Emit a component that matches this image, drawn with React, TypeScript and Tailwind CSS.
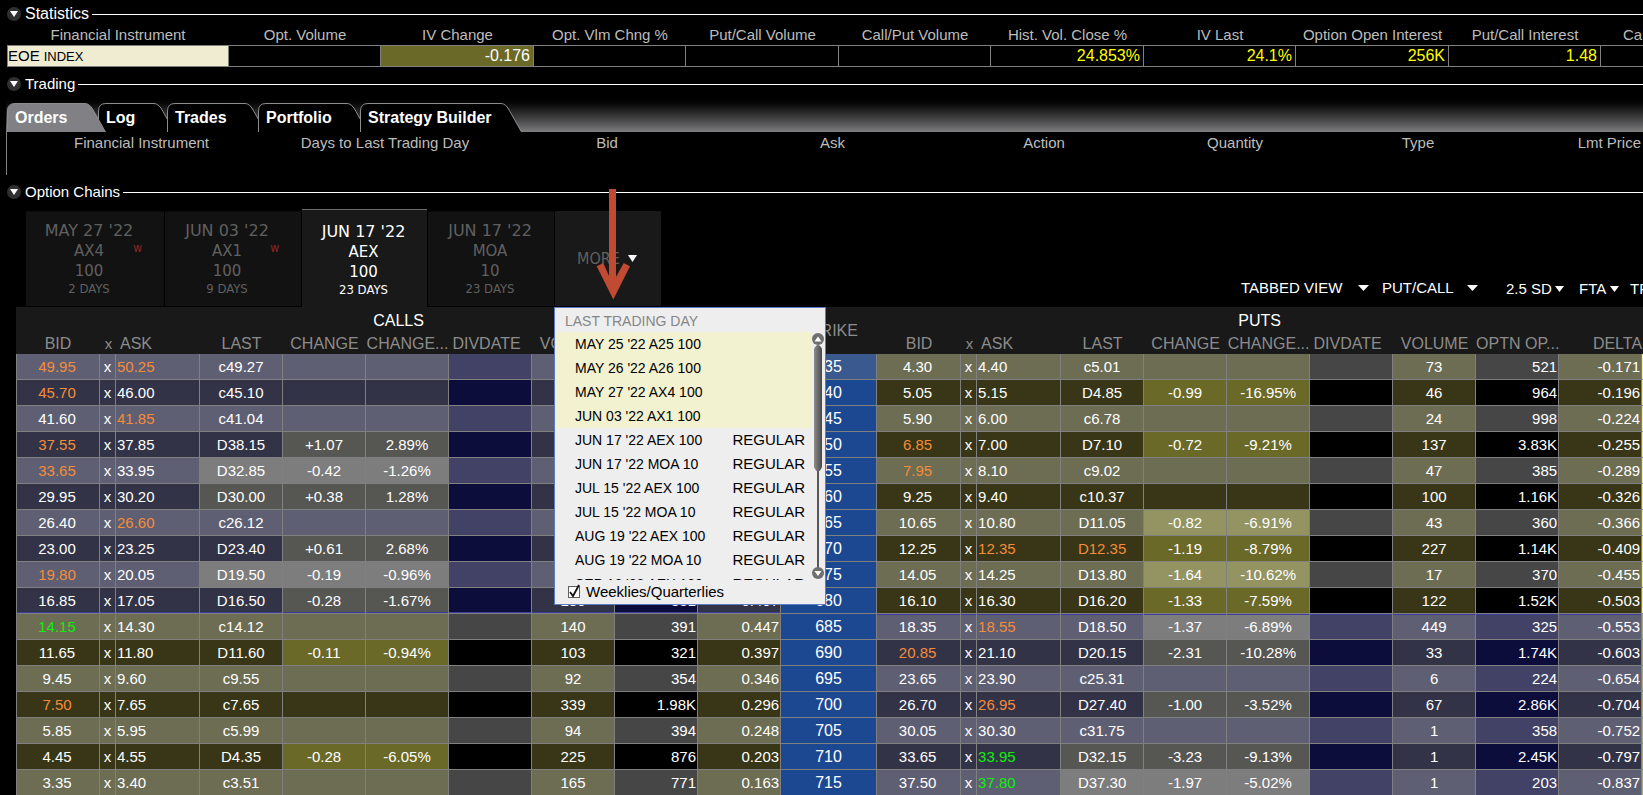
import type { ReactNode } from "react";
import clsx from "clsx";

const SANS = "font-['Liberation_Sans',Arial,sans-serif]";
const VERDANA = "font-['DejaVu_Sans',Verdana,sans-serif]";
const TAHOMA = "font-['DejaVu_Sans_Condensed','DejaVu_Sans',Tahoma,sans-serif]";

function Triangle({ className }: { className?: string }) {
  return (
    <svg viewBox="0 0 10 6" preserveAspectRatio="none" className={clsx("fill-white", className)} aria-hidden="true">
      <path d="M0 0H10L5 6Z" />
    </svg>
  );
}

function SectionTitle({ children, className, size = "text-[15px]" }: { children: string; className: string; size?: string }) {
  return (
    <div className={clsx("flex items-center pl-[7px]", className)}>
      <button aria-label={`Collapse ${children}`} className="grid size-[14px] place-items-center rounded-full bg-[#303030]">
        <Triangle className="h-[6px] w-[8px]" />
      </button>
      <h2 className={clsx("ml-1 leading-[20px] text-white", size)}>{children}</h2>
      <span className="ml-[3px] h-px flex-1 bg-white" />
    </div>
  );
}

const STATS: { label: string; value?: string; col: string; style?: string }[] = [
  { label: "Financial Instrument", col: "w-[222px]" },
  { label: "Opt. Volume", col: "w-[152px]" },
  { label: "IV Change", value: "-0.176", col: "w-[153px]", style: "bg-[#6b6928] text-white" },
  { label: "Opt. Vlm Chng %", col: "w-[152px]" },
  { label: "Put/Call Volume", col: "w-[153px]" },
  { label: "Call/Put Volume", col: "w-[152px]" },
  { label: "Hist. Vol. Close %", value: "24.853%", col: "w-[153px]", style: "text-[#ffff00]" },
  { label: "IV Last", value: "24.1%", col: "w-[152px]", style: "text-[#ffff00]" },
  { label: "Option Open Interest", value: "256K", col: "w-[153px]", style: "text-[#ffff00]" },
  { label: "Put/Call Interest", value: "1.48", col: "w-[152px]", style: "text-[#ffff00]" },
];

function Statistics() {
  return (
    <div className="pl-[7px]">
      <table className="w-full table-fixed border-separate border-spacing-0">
        <colgroup>
          {STATS.map((s) => (
            <col key={s.label} className={s.col} />
          ))}
          <col className="w-[42px]" />
        </colgroup>
        <thead>
          <tr className="h-[19px] text-[15px] leading-[17px] whitespace-nowrap text-[#bdbdbd]">
            {STATS.map((s) => (
              <th key={s.label} className="p-0 align-top font-normal">
                {s.label}
              </th>
            ))}
            <th className="overflow-hidden p-0 pl-[22px] text-left align-top font-normal">Call/Put Interest</th>
          </tr>
        </thead>
        <tbody>
          <tr className="h-[22px] text-[16px] leading-[20px] whitespace-nowrap">
            <td className="border border-[#808080] bg-[#efecd2] p-0 text-black">
              <div className="flex h-[20px] items-baseline gap-1 text-[15px]">
                EOE <span className="text-[13px]">INDEX</span>
              </div>
            </td>
            {STATS.slice(1).map((s) => (
              <td key={s.label} className={clsx("border-y border-r border-[#808080] p-0 pr-[3px] text-right", s.style)}>
                {s.value}
              </td>
            ))}
            <td className="border-y border-[#808080] p-0" />
          </tr>
        </tbody>
      </table>
    </div>
  );
}

const TRADE_TABS = [
  { label: "Orders", box: "w-[91px] z-10", top: 80 },
  { label: "Log", box: "w-[69px]", top: 58 },
  { label: "Trades", box: "w-[91px]", top: 80 },
  { label: "Portfolio", box: "w-[102px]", top: 91 },
  { label: "Strategy Builder", box: "w-[162px]", top: 143 },
];

function TradingTabs() {
  return (
    <div role="tablist" className="ml-[6px] flex h-[37px] items-end bg-linear-to-b from-black to-[#7e7e80] pl-px">
      {TRADE_TABS.map(({ label, box, top }, i) => (
        <button
          key={label}
          role="tab"
          aria-selected={i === 0}
          className={clsx("relative h-[29px] pl-2 text-left text-[16px] leading-[29px] font-bold whitespace-nowrap text-white", box)}
        >
          <svg className="absolute top-0 left-0 h-[29px] w-full overflow-visible" aria-hidden="true">
            <path
              d={`M0.5 29V8Q0.5 0.5 8 0.5H${top - 2}Q${top + 3} 0.5 ${top + 7} 8.5L${top + 18.5} 29`}
              fill={i === 0 ? "#808085" : "#000"}
              stroke="#8c8c8c"
            />
          </svg>
          <span className="relative">{label}</span>
        </button>
      ))}
    </div>
  );
}

const ORDER_COLUMNS = [
  ["Financial Instrument", "w-[269px]"],
  ["Days to Last Trading Day", "w-[218px]"],
  ["Bid", "w-[226px]"],
  ["Ask", "w-[225px]"],
  ["Action", "w-[198px]"],
  ["Quantity", "w-[184px]"],
  ["Type", "w-[182px]"],
];

function Orders() {
  return (
    <div className="ml-[6px] h-[43px] border-l border-[#808080]">
      <table className="w-full table-fixed border-separate border-spacing-0">
        <thead>
          <tr className="h-[22px] text-[15px] leading-[22px] whitespace-nowrap text-[#bdbdbd]">
            {ORDER_COLUMNS.map(([label, width]) => (
              <th key={label} className={clsx("p-0 font-normal", width)}>
                {label}
              </th>
            ))}
            <th className="w-[134px] p-0 pr-[2px] text-right font-normal">Lmt Price</th>
          </tr>
        </thead>
      </table>
    </div>
  );
}

const EXPIRIES = [
  { date: "MAY 27 '22", cls: "AX4", mult: "100", days: "2 DAYS", weekly: true, box: "w-[138px]" },
  { date: "JUN 03 '22", cls: "AX1", mult: "100", days: "9 DAYS", weekly: true, box: "w-[136px]" },
  { date: "JUN 17 '22", cls: "AEX", mult: "100", days: "23 DAYS", selected: true, box: "w-[125px]" },
  { date: "JUN 17 '22", cls: "MOA", mult: "10", days: "23 DAYS", box: "w-[126px]" },
];

const EXPIRY_MENU = [
  ["MAY 25 '22 A25 100", ""],
  ["MAY 26 '22 A26 100", ""],
  ["MAY 27 '22 AX4 100", ""],
  ["JUN 03 '22 AX1 100", ""],
  ["JUN 17 '22 AEX 100", "REGULAR"],
  ["JUN 17 '22 MOA 10", "REGULAR"],
  ["JUL 15 '22 AEX 100", "REGULAR"],
  ["JUL 15 '22 MOA 10", "REGULAR"],
  ["AUG 19 '22 AEX 100", "REGULAR"],
  ["AUG 19 '22 MOA 10", "REGULAR"],
  ["SEP 16 '22 AEX 100", "REGULAR"],
];

function ScrollRail() {
  return (
    <svg width="14" height="248" viewBox="0 0 14 248" aria-hidden="true">
      <defs>
        <linearGradient id="thumb">
          <stop offset="0" stopColor="#8c8c8c" />
          <stop offset="0.5" stopColor="#6a6a6a" />
          <stop offset="1" stopColor="#484848" />
        </linearGradient>
      </defs>
      <path d="M6 20H8V241H6Z" fill="#585858" />
      <path d="M3 17Q7 9 11 17V135Q7 144 3 135Z" fill="url(#thumb)" />
      <circle cx="7" cy="7" r="6" fill="#707070" />
      <path d="M3.5 9.5L7 4.5L10.5 9.5Z" fill="#fff" />
      <circle cx="7" cy="241" r="6" fill="#707070" />
      <path d="M3.5 239L7 244L10.5 239Z" fill="#fff" />
    </svg>
  );
}

function ExpiryMenu() {
  return (
    <div className={clsx("absolute top-[96px] -left-px z-20 w-[272px] border border-[#5b7bc4] bg-[#eeeeee] text-black", SANS)}>
      <div className="h-[24px] pl-[10px] text-[14px] leading-[26px] text-[#868686]">LAST TRADING DAY</div>
      <div className="flex h-[248px] overflow-hidden">
        <ul className="flex-1 text-[14px] leading-[24px]">
          {EXPIRY_MENU.map(([name, kind]) => (
            <li key={name}>
              <button className={clsx("flex h-[24px] w-full justify-between pr-[6px] pl-[20px]", !kind && "bg-[#f2f1d0]")}>
                <span>{name}</span>
                <span className="text-[15px]">{kind}</span>
              </button>
            </li>
          ))}
        </ul>
        <ScrollRail />
      </div>
      <label className="flex h-[24px] items-center gap-[6px] pl-[13px] text-[15px] leading-[24px]">
        <span className="relative size-[12px]">
          <input type="checkbox" defaultChecked className="peer block size-[12px] appearance-none border border-[#606060] bg-white" />
          <svg viewBox="0 0 12 12" className="pointer-events-none absolute inset-0 overflow-visible" aria-hidden="true">
            <path d="M2 6L5 10L11 -1" fill="none" stroke="#111" strokeWidth="1.8" />
          </svg>
        </span>
        Weeklies/Quarterlies
      </label>
    </div>
  );
}

function PointerArrow() {
  return (
    <svg viewBox="0 0 34 111" className="pointer-events-none absolute -top-[22px] left-[41px] h-[111px] w-[34px]" aria-hidden="true">
      <path d="M13 0H20V88L27.7 74L34 77.300L17.300 110.500L0.700 77.300L7.300 74L13 87Z" fill="#c04b32" />
    </svg>
  );
}

function ToolSelect({ label, value, gap, arrow, className }: { label: string; value: string; gap: string; arrow: string; className?: string }) {
  return (
    <label className={clsx("flex items-center", gap, className)}>
      <select aria-label={label} className="appearance-none bg-transparent text-white">
        <option>{value}</option>
      </select>
      <Triangle className={clsx("h-[6px]", arrow)} />
    </label>
  );
}

function ExpiryBar() {
  return (
    <div className="flex h-[100px] items-end pl-[26px]">
      {EXPIRIES.map((e, i) => (
        <button
          key={i}
          className={clsx(
            "relative text-center leading-[20px]",
            e.box,
            e.selected
              ? "mr-px h-[98px] border-t border-[#6c6c6c] bg-[#191919] pt-[2px] text-white"
              : "mr-px mb-px h-[95px] border-t border-[#0a0a0a] bg-[#121212] text-[#606060]",
            e.weekly ? "pr-[12px]" : "pr-[2px]",
          )}
        >
          <span className={clsx("block text-[15px]", VERDANA)}>
            <span className="text-[16px]">{e.date}</span>
            <br />
            {e.cls}
            <br />
            {e.mult}
          </span>
          <span className={clsx("block text-[13px] leading-[16px]", TAHOMA)}>{e.days}</span>
          {e.weekly && <span className={clsx("absolute top-[26px] right-[22px] text-[12px] text-[#922626]", TAHOMA)}>w</span>}
        </button>
      ))}
      <div className="relative h-[96px]">
        <button
          aria-expanded="true"
          className={clsx("flex h-[95px] w-[106px] items-center justify-center gap-2 bg-[#191919] pr-[2px] text-[16px] text-[#606060]", TAHOMA)}
        >
          MORE
          <Triangle className="h-[7px] w-[9px]" />
        </button>
        <PointerArrow />
        <ExpiryMenu />
      </div>
      <div className="mb-2 ml-auto flex items-center text-[15px] leading-[20px] text-white">
        <ToolSelect label="View" value="TABBED VIEW" gap="gap-[15px]" arrow="w-[11px]" className="mr-[13px]" />
        <ToolSelect label="Layout" value="PUT/CALL" gap="gap-[13px]" arrow="w-[11px]" className="mr-[28px]" />
        <div className="flex items-center pt-[3px]">
          <ToolSelect label="Strike range" value="2.5 SD" gap="gap-[3px]" arrow="w-[9px]" className="mr-[15px]" />
          <ToolSelect label="Exchange" value="FTA" gap="gap-[3px]" arrow="w-[9px]" className="mr-[11px]" />
          <button className="w-[13px] overflow-hidden text-left whitespace-nowrap">TRD</button>
        </div>
      </div>
    </div>
  );
}

/*
 * One side of a strike: bid, ask, last, change, change %, volume, open interest, delta.
 * "o:" marks a stale (orange) price, "g:" an uptick (green) price, "h:" a highlighted last trade.
 */
type Quote = [string, string, string, string, string, string, string, string];

const CHAIN: [number, Quote, Quote][] = [
  [635, ["o:49.95", "o:50.25", "c49.27", "", "", "", "", ""], ["4.30", "4.40", "c5.01", "", "", "73", "521", "-0.171"]],
  [640, ["o:45.70", "46.00", "c45.10", "", "", "", "", ""], ["5.05", "5.15", "D4.85", "-0.99", "-16.95%", "46", "964", "-0.196"]],
  [645, ["41.60", "o:41.85", "c41.04", "", "", "", "", ""], ["5.90", "6.00", "c6.78", "", "", "24", "998", "-0.224"]],
  [650, ["o:37.55", "37.85", "D38.15", "+1.07", "2.89%", "", "", ""], ["o:6.85", "7.00", "D7.10", "-0.72", "-9.21%", "137", "3.83K", "-0.255"]],
  [655, ["o:33.65", "33.95", "h:D32.85", "-0.42", "-1.26%", "", "", ""], ["o:7.95", "8.10", "c9.02", "", "", "47", "385", "-0.289"]],
  [660, ["29.95", "30.20", "h:D30.00", "+0.38", "1.28%", "", "", ""], ["9.25", "9.40", "c10.37", "", "", "100", "1.16K", "-0.326"]],
  [665, ["26.40", "o:26.60", "c26.12", "", "", "", "", ""], ["10.65", "10.80", "D11.05", "-0.82", "-6.91%", "43", "360", "-0.366"]],
  [670, ["23.00", "23.25", "D23.40", "+0.61", "2.68%", "", "", ""], ["12.25", "o:12.35", "o:D12.35", "-1.19", "-8.79%", "227", "1.14K", "-0.409"]],
  [675, ["o:19.80", "20.05", "h:D19.50", "-0.19", "-0.96%", "", "", ""], ["14.05", "14.25", "D13.80", "-1.64", "-10.62%", "17", "370", "-0.455"]],
  [680, ["16.85", "17.05", "D16.50", "-0.28", "-1.67%", "180", "331", "0.497"], ["16.10", "16.30", "D16.20", "-1.33", "-7.59%", "122", "1.52K", "-0.503"]],
  [685, ["g:14.15", "14.30", "c14.12", "", "", "140", "391", "0.447"], ["18.35", "o:18.55", "D18.50", "-1.37", "-6.89%", "449", "325", "-0.553"]],
  [690, ["11.65", "11.80", "D11.60", "-0.11", "-0.94%", "103", "321", "0.397"], ["o:20.85", "21.10", "D20.15", "-2.31", "-10.28%", "33", "1.74K", "-0.603"]],
  [695, ["9.45", "9.60", "c9.55", "", "", "92", "354", "0.346"], ["23.65", "23.90", "c25.31", "", "", "6", "224", "-0.654"]],
  [700, ["o:7.50", "7.65", "c7.65", "", "", "339", "1.98K", "0.296"], ["26.70", "o:26.95", "D27.40", "-1.00", "-3.52%", "67", "2.86K", "-0.704"]],
  [705, ["5.85", "5.95", "c5.99", "", "", "94", "394", "0.248"], ["30.05", "30.30", "c31.75", "", "", "1", "358", "-0.752"]],
  [710, ["4.45", "4.55", "D4.35", "-0.28", "-6.05%", "225", "876", "0.203"], ["33.65", "g:33.95", "h:D32.15", "-3.23", "-9.13%", "1", "2.45K", "-0.797"]],
  [715, ["3.35", "3.40", "c3.51", "", "", "165", "771", "0.163"], ["37.50", "g:37.80", "h:D37.30", "-1.97", "-5.02%", "1", "203", "-0.837"]],
];

const ATM_STRIKE = 680;

const PALETTE = {
  itm: {
    light: { base: "bg-[#5f5f74]", alt: "bg-[#424266]", mark: "bg-[#7d7d7d]" },
    dark: { base: "bg-[#333347]", alt: "bg-[#0d0d3b]", mark: "bg-[#565653]" },
  },
  otm: {
    light: { base: "bg-[#6d6d54]", alt: "bg-[#464646]", mark: "bg-[#949463]" },
    dark: { base: "bg-[#383616]", alt: "bg-black", mark: "bg-[#6b6928]" },
  },
};

function Cell({ bg, line, align, children }: { bg: string; line: string; align?: string; children?: ReactNode }) {
  let text = children;
  let color = "text-white";
  if (typeof text === "string") {
    if (text.startsWith("o:")) color = "text-[#f58c38]";
    if (text.startsWith("g:")) color = "text-[#0cf00c]";
    text = text.replace(/^[ogh]:/, "");
  }
  return <td className={clsx("border-r border-b border-[#808080] p-0", bg, line, color, align ?? "text-center")}>{text}</td>;
}

function QuoteCells({ quote, side, dark, line }: { quote: Quote; side: "itm" | "otm"; dark: boolean; line: string }) {
  const tone = PALETTE[side][dark ? "dark" : "light"];
  const [bid, ask, last, change, changePct, volume, interest, delta] = quote;
  const changeBg = change ? tone.mark : tone.base;
  return (
    <>
      <Cell bg={tone.base} line={line} align="text-center pr-[2px]">{bid}</Cell>
      <Cell bg={tone.base} line={line}>x</Cell>
      <Cell bg={tone.base} line={line} align="text-left pl-px">{ask}</Cell>
      <Cell bg={last.startsWith("h:") ? tone.mark : tone.base} line={line}>{last}</Cell>
      <Cell bg={changeBg} line={line}>{change}</Cell>
      <Cell bg={changeBg} line={line}>{changePct}</Cell>
      <Cell bg={tone.alt} line={line} />
      <Cell bg={tone.base} line={line}>{volume}</Cell>
      <Cell bg={tone.alt} line={line} align="text-right pr-px">{interest}</Cell>
      <Cell bg={tone.base} line={line} align="text-right pr-px">{delta}</Cell>
    </>
  );
}

const SIDE_HEADERS = [
  ["BID", "text-center"],
  ["x", "text-center text-[15px] pl-px"],
  ["ASK", "text-left pl-1"],
  ["LAST", "text-center"],
  ["CHANGE", "text-center"],
  ["CHANGE...", "text-center"],
  ["DIVDATE", "text-center pr-2"],
  ["VOLUME", "text-center"],
  ["OPTN OP...", "text-center"],
  ["DELTA", "text-right"],
];

function SideHeaders() {
  return SIDE_HEADERS.map(([label, align]) => (
    <th key={label} className={clsx("p-0 font-normal", align)}>
      {label}
    </th>
  ));
}

function Columns({ bid }: { bid: string }) {
  return (
    <>
      <col className={bid} />
      <col className="w-[16px]" />
      <col className="w-[84px]" />
      {[0, 1, 2, 3, 4, 5, 6].map((i) => (
        <col key={i} className="w-[83px]" />
      ))}
    </>
  );
}

function OptionChain() {
  return (
    <div className="ml-4 bg-[#191919]">
      <table className="w-full table-fixed border-separate border-spacing-0 whitespace-nowrap">
        <colgroup>
          <Columns bid="w-[84px]" />
          <col className="w-[96px]" />
          <Columns bid="w-[84px]" />
          <col className="w-[1px]" />
        </colgroup>
        <thead className="text-[16px] text-[#8c8c8c]">
          <tr className="h-[27px] leading-[27px]">
            <th colSpan={10} className="p-0 font-normal text-white">CALLS</th>
            <th rowSpan={2} className="p-0 font-normal">STRIKE</th>
            <th colSpan={10} className="p-0 font-normal text-white">PUTS</th>
            <th className="p-0" />
          </tr>
          <tr className="h-[20px] leading-[20px]">
            <SideHeaders />
            <SideHeaders />
            <th className="p-0" />
          </tr>
        </thead>
        <tbody className="text-[15px] leading-[25px]">
          {CHAIN.map(([strike, call, put], i) => {
            const callItm = strike <= ATM_STRIKE;
            return (
              <tr key={strike} className="h-[26px] [&>td:first-child]:border-l">
                <QuoteCells
                  quote={call}
                  side={callItm ? "itm" : "otm"}
                  dark={i % 2 === 1}
                  line={strike === ATM_STRIKE ? "shadow-[inset_0_-1px_#3c3c9c]" : ""}
                />
                <td
                  className={clsx(
                    "border-r border-b border-[#808080] p-0 text-center text-[16px] text-white",
                    i === 0 ? "bg-[#39598f]" : "bg-[#1c4791]",
                  )}
                >
                  {strike}
                </td>
                <QuoteCells
                  quote={put}
                  side={callItm ? "otm" : "itm"}
                  dark={i % 2 === 1}
                  line={strike === ATM_STRIKE + 5 ? "shadow-[inset_0_1px_#3c3c9c]" : ""}
                />
                <td className={clsx("border-b border-[#808080] p-0", callItm ? "bg-[#f0f0a0]" : "bg-[#a9ac80]")} />
              </tr>
            );
          })}
        </tbody>
      </table>
    </div>
  );
}

export default function App() {
  return (
    <main className={clsx("h-screen overflow-hidden bg-black", SANS)}>
      <SectionTitle className="h-[26px] pt-[2px]" size="text-[16px]">Statistics</SectionTitle>
      <Statistics />
      <SectionTitle className="h-[28px] pt-[6px]">Trading</SectionTitle>
      <TradingTabs />
      <Orders />
      <SectionTitle className="h-[32px] pt-[2px]">Option Chains</SectionTitle>
      <ExpiryBar />
      <OptionChain />
    </main>
  );
}
